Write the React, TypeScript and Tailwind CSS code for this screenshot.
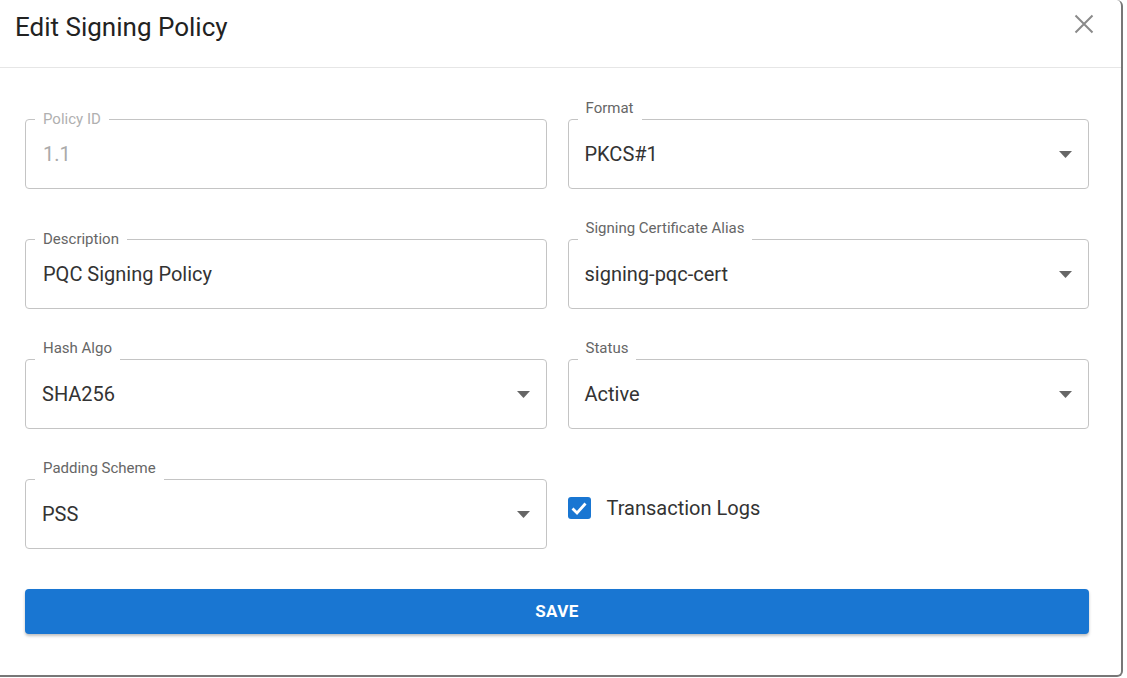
import React from "react";

const font = { fontFamily: "Roboto, 'Noto Sans', sans-serif" };

function Arrow() {
  return (
    <svg width="13" height="7" viewBox="0 0 13 7" className="shrink-0">
      <path d="M0 0h13L6.5 7z" fill="#666" />
    </svg>
  );
}

function TextField({ label, value, disabled }: { label: string; value: string; disabled?: boolean }) {
  return (
    <div className="relative h-[70px] rounded-[4px] border border-[#c4c4c4] flex items-center px-[17px]">
      <span
        className={`absolute left-[9px] top-[-10px] px-[8px] bg-white text-[15px] leading-[18px] ${
          disabled ? "text-[#b0b0b0]" : "text-[#666]"
        }`}
      >
        {label}
      </span>
      <span className={`text-[20px] ${disabled ? "text-[#aaa]" : "text-[#333]"}`}>{value}</span>
    </div>
  );
}

function SelectField({ label, value }: { label: string; value: string }) {
  return (
    <div className="relative h-[70px] rounded-[4px] border border-[#c4c4c4] flex items-center justify-between pl-[16px] pr-[16px]">
      <span className="absolute left-[9px] top-[-21px] h-[21px] px-[8px] bg-white text-[15px] leading-[18px] text-[#666]">
        {label}
      </span>
      <span className="text-[20px] text-[#333]">{value}</span>
      <Arrow />
    </div>
  );
}

export default function App() {
  const [logs, setLogs] = React.useState(true);

  return (
    <div className="w-[1127px] h-[678px] bg-white overflow-hidden" style={font}>
      <div className="w-[1123px] h-[677px] bg-white border-r-2 border-b-2 border-[#777] rounded-br-[6px] rounded-tr-[6px]">
        <div className="h-[68px] border-b border-[#e6e6e6] flex items-start justify-between pl-[15px] pr-[26px] pt-[12px]">
          <h1 className="text-[26px] leading-[31px] font-normal text-[#222]">Edit Signing Policy</h1>
          <button className="mt-[1px] w-[22px] h-[22px] flex items-center justify-center">
            <svg width="20" height="20" viewBox="0 0 20 20">
              <path d="M1.5 1.5L18.5 18.5M18.5 1.5L1.5 18.5" stroke="#8a8a8a" strokeWidth="2" />
            </svg>
          </button>
        </div>

        <div className="px-[25px] pt-[51px] w-[1114px]">
          <div className="grid grid-cols-2 gap-x-[21px] gap-y-[50px]">
            <TextField label="Policy ID" value="1.1" disabled />
            <SelectField label="Format" value="PKCS#1" />
            <TextField label="Description" value="PQC Signing Policy" />
            <SelectField label="Signing Certificate Alias" value="signing-pqc-cert" />
            <SelectField label="Hash Algo" value="SHA256" />
            <SelectField label="Status" value="Active" />
            <SelectField label="Padding Scheme" value="PSS" />
            <div className="h-[70px] flex items-start pt-[14px]">
              <label className="flex items-center gap-[16px] cursor-pointer">
                <button
                  onClick={() => setLogs(!logs)}
                  className={`w-[23px] h-[22px] rounded-[3px] flex items-center justify-center ${
                    logs ? "bg-[#1976d2]" : "border-2 border-[#777]"
                  }`}
                >
                  {logs && (
                    <svg width="18" height="18" viewBox="0 0 18 18">
                      <path d="M2.5 9.5L7 14L15.5 4.5" stroke="white" strokeWidth="2.8" fill="none" />
                    </svg>
                  )}
                </button>
                <span className="text-[20px] text-[#333]">Transaction Logs</span>
              </label>
            </div>
          </div>

          <button className="mt-[40px] w-full h-[45px] rounded-[4px] bg-[#1976d2] text-white text-[17px] font-bold tracking-[0.4px] shadow-[0_2px_3px_rgba(0,0,0,0.25)]">
            SAVE
          </button>
        </div>
      </div>
    </div>
  );
}
